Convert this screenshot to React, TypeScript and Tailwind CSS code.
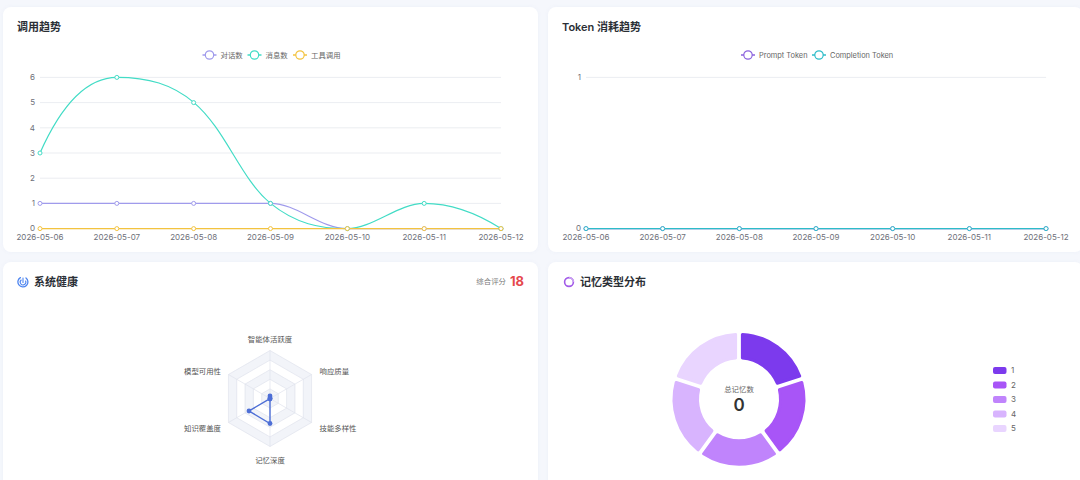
import type React from 'react';

interface Series {
  color: string;
  d: string;
  points: [number, number][];
}

interface LegendItem {
  label: string;
  color: string;
  x: number;
}

interface LineChartProps {
  x0: number;
  step: number;
  yLabels: { label: string; y: number }[];
  series: Series[];
  legend: LegendItem[];
  viewBox: string;
}

const DATES = ['2026-05-06', '2026-05-07', '2026-05-08', '2026-05-09', '2026-05-10', '2026-05-11', '2026-05-12'];
const Y0 = 228.6;
const YS = 25.2;
const xs = (x0: number, step: number) => DATES.map((_, i) => x0 + i * step);

const LineChart: React.FC<LineChartProps> = ({ x0, step, yLabels, series, legend, viewBox }) => {
  const x1 = x0 + step * 6;
  return (
    <svg viewBox={viewBox} className="block h-[209px] w-[535px]">
      {legend.map((l) => (
        <g key={l.label}>
          <line x1={l.x - 7} x2={l.x + 7} y1={55} y2={55} stroke={l.color} strokeWidth={1.4} />
          <circle cx={l.x} cy={55} r={4.2} fill="#fff" stroke={l.color} strokeWidth={1.2} />
          <text x={l.x + 11} y={57.6} fontSize={7.4} fill="#666">{l.label}</text>
        </g>
      ))}
      {yLabels.map((t) => (
        <g key={t.label}>
          {t.label !== '0' && <line x1={x0} x2={x1} y1={t.y} y2={t.y} stroke="#e6e8ee" strokeWidth={0.8} />}
          <text x={x0 - 5} y={t.y + 2.8} fontSize={8} fill="#6e7079" textAnchor="end">{t.label}</text>
        </g>
      ))}
      <line x1={x0} x2={x1} y1={Y0} y2={Y0} stroke="#d5d8e0" strokeWidth={0.8} />
      {DATES.map((d, i) => (
        <text key={d} x={x0 + i * step} y={240} fontSize={8} fill="#6e7079" textAnchor="middle">{d}</text>
      ))}
      {series.map((s) => (
        <path key={s.color} d={s.d} fill="none" stroke={s.color} strokeWidth={1.2} />
      ))}
      {series.map((s) =>
        s.points.map(([px, py]) => (
          <circle key={`${s.color}-${px}`} cx={px} cy={py} r={2} fill="#fff" stroke={s.color} strokeWidth={1} />
        ))
      )}
    </svg>
  );
};

// 5 rings, outer one first
const hexagon = (r: number) =>
  [0, 1, 2, 3, 4, 5]
    .map((i) => {
      const a = (Math.PI / 3) * i;
      return `${(270 + r * Math.sin(a)).toFixed(2)},${(398.5 - r * Math.cos(a)).toFixed(2)}`;
    })
    .join(' ');

const RADAR_LABELS: { text: string; x: number; y: number; anchor: 'middle' | 'start' | 'end' }[] = [
  { text: '智能体活跃度', x: 270, y: 341.5, anchor: 'middle' },
  { text: '响应质量', x: 319.5, y: 373.5, anchor: 'start' },
  { text: '技能多样性', x: 319.5, y: 431, anchor: 'start' },
  { text: '记忆深度', x: 270, y: 463, anchor: 'middle' },
  { text: '知识覆盖度', x: 221, y: 431, anchor: 'end' },
  { text: '模型可用性', x: 221, y: 373.5, anchor: 'end' },
];

const RADAR_POINTS: [number, number][] = [
  [270, 396],
  [270, 398],
  [270, 399],
  [270, 423.5],
  [249, 411],
  [270, 398.5],
];

const RadarChart = () => (
  <svg viewBox="3 302 535 178" className="block h-[178px] w-[535px]">
    {[48, 38.4, 28.8, 19.2, 9.6].map((r, i) => (
      <polygon
        key={r}
        points={hexagon(r)}
        fill={i % 2 === 0 ? '#f2f4f9' : '#ffffff'}
        stroke="#e0e3ec"
        strokeWidth={0.7}
      />
    ))}
    {[0, 1, 2, 3, 4, 5].map((i) => {
      const a = (Math.PI / 3) * i;
      return (
        <line
          key={i}
          x1={270}
          y1={398.5}
          x2={270 + 48 * Math.sin(a)}
          y2={398.5 - 48 * Math.cos(a)}
          stroke="#e0e3ec"
          strokeWidth={0.7}
        />
      );
    })}
    <polygon
      points={RADAR_POINTS.map((p) => p.join(',')).join(' ')}
      fill="none"
      stroke="#4e6fd6"
      strokeWidth={1.4}
    />
    {RADAR_POINTS.map(([x, y]) => (
      <circle key={`${x}-${y}`} cx={x} cy={y} r={2.4} fill="#4e6fd6" />
    ))}
    {RADAR_LABELS.map((l) => (
      <text key={l.text} x={l.x} y={l.y} fontSize={7.4} fill="#555" textAnchor={l.anchor}>{l.text}</text>
    ))}
  </svg>
);

const DONUT_COLORS = ['#7c3aed', '#a855f7', '#c084fc', '#d8b4fe', '#e9d5ff'];
const DONUT_LEGEND_Y = [370.5, 385, 399.5, 414, 428.5];

const donutSlice = (index: number) => {
  const cx = 739;
  const cy = 399.3;
  const ro = 65;
  const ri = 41.5;
  const start = ((index * 72 + 3) * Math.PI) / 180;
  const end = (((index + 1) * 72 - 3) * Math.PI) / 180;
  const pt = (r: number, a: number) => `${(cx + r * Math.sin(a)).toFixed(2)} ${(cy - r * Math.cos(a)).toFixed(2)}`;
  return `M${pt(ro, start)} A${ro} ${ro} 0 0 1 ${pt(ro, end)} L${pt(ri, end - 0.03)} A${ri} ${ri} 0 0 0 ${pt(ri, start + 0.03)} Z`;
};

const DonutChart = () => (
  <svg viewBox="548 302 535 178" className="block h-[178px] w-[535px]">
    {DONUT_COLORS.map((c, i) => (
      <path key={c} d={donutSlice(i)} fill={c} stroke={c} strokeWidth={3} strokeLinejoin="round" />
    ))}
    <text x={739} y={392} fontSize={7.4} fill="#666" textAnchor="middle">总记忆数</text>
    <text x={739} y={411} fontSize={17} fontWeight={600} fill="#333" textAnchor="middle">0</text>
    {DONUT_COLORS.map((c, i) => (
      <g key={c}>
        <rect x={993} y={DONUT_LEGEND_Y[i] - 3.5} width={13.5} height={7} rx={2} fill={c} />
        <text x={1011} y={DONUT_LEGEND_Y[i] + 2.8} fontSize={8} fill="#666">{i + 1}</text>
      </g>
    ))}
  </svg>
);

const HealthIcon = () => (
  <svg viewBox="0 0 12 12" className="h-[12px] w-[12px]" fill="none" stroke="#4f86f0" strokeLinecap="round">
    <path d="M3.4 1.6A5 5 0 1 0 9 2" strokeWidth={1.3} />
    <path d="M4.2 4A2.8 2.8 0 1 0 8.6 5" strokeWidth={1.1} />
    <path d="M6 2v4.4" strokeWidth={1.1} />
  </svg>
);

const MemoryIcon = () => (
  <svg viewBox="0 0 12 12" className="h-[12px] w-[12px]" fill="none" strokeWidth={1.6}>
    <circle cx={6} cy={6} r={4.4} stroke="#a25be8" />
    <path d="M6 1.6A4.4 4.4 0 0 1 10.4 6" stroke="#c9a0f2" />
  </svg>
);

const Card: React.FC<{ children: React.ReactNode }> = ({ children }) => (
  <div className="overflow-hidden rounded-lg bg-white shadow-[0_0_4px_rgba(120,140,190,0.06)]">{children}</div>
);

export default function App() {
  const leftX = xs(40, 76.83);
  const rightX = xs(586, 76.67);
  return (
    <div className="h-[480px] w-[1080px] overflow-hidden bg-[#f5f7fc] font-[Inter,'Noto_Sans_CJK_SC',sans-serif]">
      <div className="grid w-[1090px] grid-cols-[535px_535px] grid-rows-[245px_245px] gap-[10px] pl-[3px] pt-[7px]">
        <Card>
          <div className="flex h-[36px] items-center px-[14px] pt-[4px] text-[11px] font-semibold text-[#2b2f36]">调用趋势</div>
          <LineChart
            viewBox="3 43 535 209"
            x0={40}
            step={76.83}
            yLabels={[0, 1, 2, 3, 4, 5, 6].map((n) => ({ label: String(n), y: Y0 - n * YS }))}
            legend={[
              { label: '对话数', color: '#a09bec', x: 209.5 },
              { label: '消息数', color: '#43dcc6', x: 254.5 },
              { label: '工具调用', color: '#f3c33f', x: 300 },
            ]}
            series={[
              {
                color: '#a09bec',
                d: `M40 ${Y0 - YS} L270.5 ${Y0 - YS} C297 ${Y0 - YS} 320 ${Y0} 347 ${Y0} L501 ${Y0}`,
                points: leftX.map((x, i) => [x, i < 4 ? Y0 - YS : Y0]),
              },
              {
                color: '#43dcc6',
                d: `M40 ${Y0 - 3 * YS} C60 108 85 77.4 117 77.4 C148 77.4 172 84 194 102.6 C226 130 240 178 270.5 ${Y0 - YS} C296 224 320 ${Y0} 347 ${Y0} C373 ${Y0} 398 ${Y0 - YS} 424 ${Y0 - YS} C450 ${Y0 - YS} 475 212 501 ${Y0}`,
                points: leftX.map((x, i) => [x, Y0 - [3, 6, 5, 1, 0, 1, 0][i] * YS]),
              },
              {
                color: '#f3c33f',
                d: `M40 ${Y0} L501 ${Y0}`,
                points: leftX.map((x) => [x, Y0]),
              },
            ]}
          />
        </Card>
        <Card>
          <div className="flex h-[36px] items-center px-[14px] pt-[4px] text-[11px] font-semibold text-[#2b2f36]">Token 消耗趋势</div>
          <LineChart
            viewBox="548 43 535 209"
            x0={586}
            step={76.67}
            yLabels={[
              { label: '0', y: Y0 },
              { label: '1', y: 77.4 },
            ]}
            legend={[
              { label: 'Prompt Token', color: '#8b62dd', x: 748 },
              { label: 'Completion Token', color: '#2dbcc8', x: 819 },
            ]}
            series={[
              { color: '#8b62dd', d: `M586 ${Y0} L1046 ${Y0}`, points: rightX.map((x) => [x, Y0]) },
              { color: '#2dbcc8', d: `M586 ${Y0} L1046 ${Y0}`, points: rightX.map((x) => [x, Y0]) },
            ]}
          />
        </Card>
        <Card>
          <div className="flex h-[40px] items-center justify-between pl-[14px] pr-[14px]">
            <div className="flex items-center gap-[5px] text-[11px] font-semibold text-[#2b2f36]">
              <HealthIcon />
              <span>系统健康</span>
            </div>
            <div className="flex items-center gap-[4px]">
              <span className="text-[7.4px] text-[#777]">综合评分</span>
              <span className="text-[13px] font-bold text-[#e5484d]">18</span>
            </div>
          </div>
          <RadarChart />
        </Card>
        <Card>
          <div className="flex h-[40px] items-center gap-[5px] pl-[15px] text-[11px] font-semibold text-[#2b2f36]">
            <MemoryIcon />
            <span>记忆类型分布</span>
          </div>
          <DonutChart />
        </Card>
      </div>
    </div>
  );
}
